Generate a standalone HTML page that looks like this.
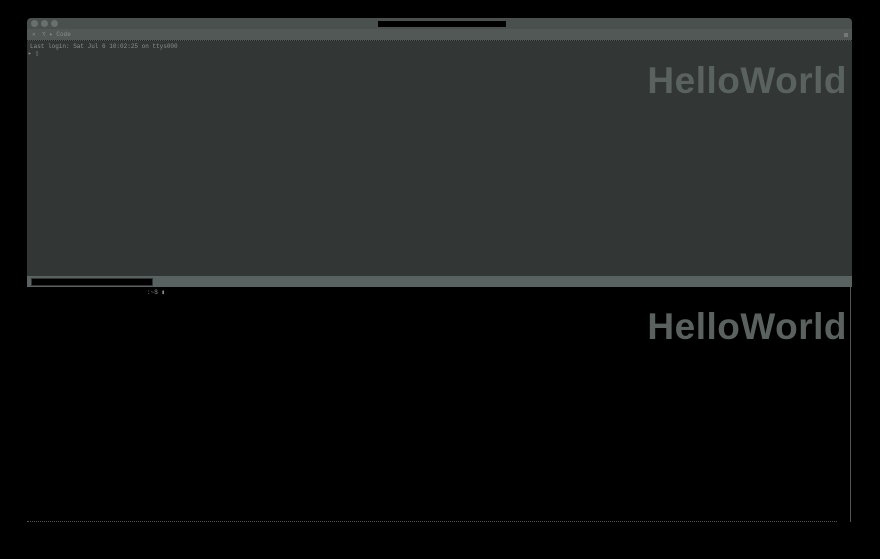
<!DOCTYPE html>
<html><head><meta charset="utf-8"><style>
html,body{margin:0;padding:0;background:#000;width:880px;height:559px;overflow:hidden;font-family:"Liberation Sans",sans-serif}
.win{position:absolute;left:27px;top:18px;width:825px;height:504px;background:#000;border-radius:4px 4px 0 0;overflow:hidden}
.title{position:absolute;left:0;top:0;width:825px;height:11px;background:#4a504d}
.dot{position:absolute;top:2px;width:7px;height:7px;border-radius:50%;background:#6a706d}
.tbar{position:absolute;left:351px;top:3px;width:128px;height:6px;background:#000}
.tabs{position:absolute;left:0;top:11px;width:825px;height:11px;background:#515855;border-bottom:1px dotted #222}
.upper{position:absolute;left:0;top:23px;width:825px;height:235px;background:#323634}
.mono{font-family:"Liberation Mono",monospace;font-size:6px;color:#8a928e;position:absolute}
.hw{position:absolute;right:5px;font-weight:bold;font-size:37px;color:#5a625f;letter-spacing:0.5px}
.div{position:absolute;left:0;top:258px;width:825px;height:11px;background:#586260}
.dbox{position:absolute;left:4px;top:2px;width:120px;height:6px;background:#000;border:1px solid #333}
.lower{position:absolute;left:0;top:269px;width:823px;height:235px;background:#000;border-right:1px solid #555}
.bot{position:absolute;left:27px;top:521px;width:810px;height:2px;border-top:1px dotted #555}
</style></head><body>
<div class="win">
 <div class="title">
  <div class="dot" style="left:4px"></div><div class="dot" style="left:14px"></div><div class="dot" style="left:24px"></div>
  <div class="tbar"></div>
 </div>
 <div class="tabs">
  <span class="mono" style="left:5px;top:2px">✕</span>
  <span class="mono" style="left:15px;top:2px">⌥ ▸ Code</span>
  <div style="position:absolute;right:4px;top:4px;width:4px;height:4px;background:#777"></div>
 </div>
 <div class="upper">
  <span class="mono" style="left:3px;top:2px">Last login: Sat Jul  6 10:02:25 on ttys000</span>
  <span class="mono" style="left:1px;top:9px">▸ ▯</span>
  <div class="hw" style="top:19px">HelloWorld</div>
 </div>
 <div class="div"><div class="dbox"></div></div>
 <div class="lower">
  <span class="mono" style="left:120px;top:2px;color:#888">:~$ ▮</span>
  <div class="hw" style="top:19px;right:3px">HelloWorld</div>
 </div>
</div>
<div class="bot"></div>
</body></html>
